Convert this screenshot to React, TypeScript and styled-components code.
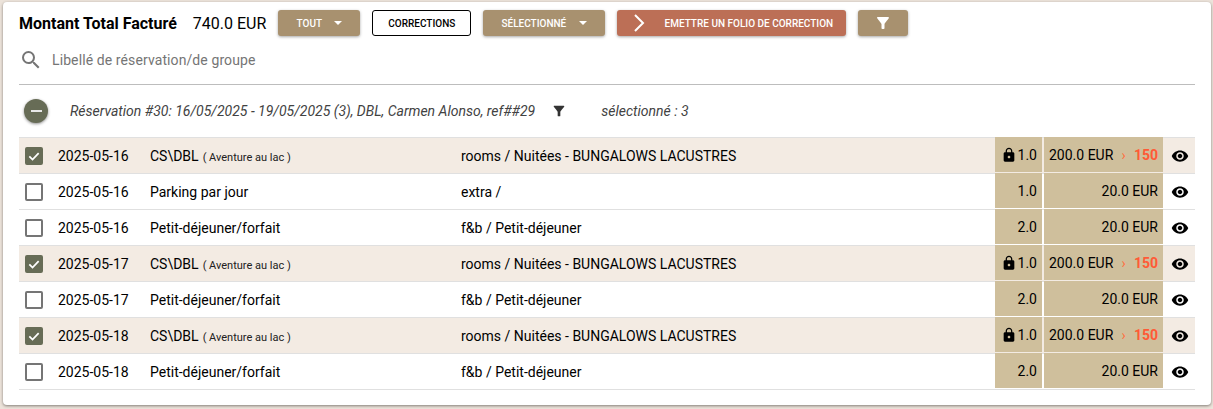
import React from 'react';
import styled, { createGlobalStyle } from 'styled-components';

const GlobalStyle = createGlobalStyle`
  html, body {
    margin: 0;
    padding: 0;
    background: #ece3da;
    font-family: Roboto, "Liberation Sans", sans-serif;
  }
`;

const Page = styled.div`
  width: 1213px;
  height: 409px;
  padding: 2px 2px 4px 3px;
  box-sizing: border-box;
  overflow: hidden;
`;

const Card = styled.div`
  height: 403px;
  background: #fff;
  border-radius: 4px;
  box-shadow: 0 1px 3px rgba(0, 0, 0, 0.45);
  padding: 8px 16px 0 16px;
  box-sizing: border-box;
`;

const Toolbar = styled.div`
  display: flex;
  align-items: center;
  height: 26px;
`;

const Title = styled.span`
  font-size: 16px;
  font-weight: 700;
  color: #000;
  margin-right: 16px;
`;

const Amount = styled.span`
  font-size: 16px;
  color: #000;
  margin-right: 12px;
`;

const ActionButton = styled.button<{ $width: number; $color?: string; $gap?: number }>`
  width: ${(p) => p.$width}px;
  height: 26px;
  margin-right: 12px;
  border: none;
  border-radius: 3px;
  background: ${(p) => p.$color || '#a8916f'};
  color: #fff;
  font-family: inherit;
  font-size: 10px;
  font-weight: 500;
  padding: 0;
  display: flex;
  align-items: center;
  justify-content: center;
  gap: ${(p) => p.$gap ?? 0}px;
  box-shadow: 0 1px 3px rgba(0, 0, 0, 0.35);
`;

const OutlineButton = styled.button`
  width: 99px;
  height: 26px;
  margin-right: 12px;
  border: 1px solid #000;
  border-radius: 3px;
  background: #fff;
  color: #000;
  font-family: inherit;
  font-size: 10px;
  font-weight: 500;
  padding: 0;
`;

const Caret = styled.span`
  width: 0;
  height: 0;
  border-left: 4px solid transparent;
  border-right: 4px solid transparent;
  border-top: 4px solid #fff;
`;

const SearchBar = styled.div`
  display: flex;
  align-items: center;
  gap: 9px;
  height: 49px;
  box-sizing: border-box;
  border-bottom: 1px solid #bdbdbd;
  color: #757575;
  font-size: 14px;
  letter-spacing: 0.1px;
`;

const SearchRow = styled.div`
  margin-top: 0;
`;

const GroupHeader = styled.div`
  display: flex;
  align-items: center;
  height: 52px;
  padding-left: 5px;
  font-size: 14px;
  font-style: italic;
  color: #424242;
`;

const CollapseButton = styled.span`
  width: 24px;
  height: 24px;
  border-radius: 50%;
  background: #676c56;
  box-shadow: 0 1px 3px rgba(0, 0, 0, 0.45);
  display: flex;
  align-items: center;
  justify-content: center;
  margin-right: 22px;
  &::after {
    content: '';
    width: 11px;
    height: 2px;
    background: #e8e8e8;
  }
`;

const FilterMark = styled.span`
  display: flex;
  margin: 0 34px 0 16px;
`;

const Rows = styled.div`
  border-top: 1px solid #e0e0e0;
`;

const Row = styled.div<{ $selected?: boolean }>`
  display: grid;
  grid-template-columns: 39px 92px 311px 534px 49px 120px 32px;
  height: 36px;
  box-sizing: border-box;
  border-bottom: 1px solid #e0e0e0;
  background: ${(p) => (p.$selected ? '#f3ebe3' : '#fff')};
  align-items: center;
  font-size: 14px;
  color: #000;
`;

const CheckCell = styled.div`
  padding-left: 6px;
  display: flex;
`;

const CheckBox = styled.span<{ $checked?: boolean }>`
  width: 18px;
  height: 18px;
  box-sizing: border-box;
  border-radius: 2px;
  border: 2px solid ${(p) => (p.$checked ? '#676c56' : '#757575')};
  background: ${(p) => (p.$checked ? '#676c56' : '#fff')};
  display: flex;
  align-items: center;
  justify-content: center;
`;

const Note = styled.span`
  font-size: 11px;
  margin-left: 4px;
  color: #212121;
`;

const AmountCell = styled.div`
  align-self: stretch;
  margin: -1px 2px -0px 0;
  background: #cfbf9c;
  display: flex;
  align-items: center;
  justify-content: flex-end;
  padding-right: 5px;
  height: 35px;
  box-sizing: border-box;
`;

const PriceCell = styled(AmountCell)`
  margin-right: 0;
  width: 119px;
  justify-content: space-between;
  padding: 0 5px;
`;

const PriceRight = styled.span`
  margin-left: auto;
`;

const Arrow = styled.span`
  color: #ff6e40;
  margin-left: 6px;
  font-size: 14px;
`;

const NewPrice = styled.span`
  color: #ff5a36;
  font-weight: 700;
  margin-left: 6px;
`;

const EyeCell = styled.div`
  display: flex;
  justify-content: center;
  padding-right: 0;
`;

const FilterIcon = ({ size, color }: { size: number; color: string }) => (
  <svg width={size} height={size} viewBox="0 0 24 24" fill={color}>
    <path d="M4.25 5.61C6.27 8.2 10 13 10 13v6c0 .55.45 1 1 1h2c.55 0 1-.45 1-1v-6s3.72-4.8 5.74-7.39A.998.998 0 0 0 18.95 4H5.04c-.83 0-1.3.95-.79 1.61z" />
  </svg>
);

const SearchIcon = () => (
  <svg width="24" height="24" viewBox="0 0 24 24" fill="#757575">
    <path d="M15.5 14h-.79l-.28-.27A6.471 6.471 0 0 0 16 9.5 6.5 6.5 0 1 0 9.5 16c1.61 0 3.09-.59 4.23-1.57l.27.28v.79l5 4.99L20.49 19l-4.99-5zm-6 0C7.01 14 5 11.99 5 9.5S7.01 5 9.5 5 14 7.01 14 9.5 11.99 14 9.5 14z" />
  </svg>
);

const EyeIcon = () => (
  <svg width="18" height="18" viewBox="0 0 24 24" fill="#000">
    <path d="M12 4.5C7 4.5 2.73 7.61 1 12c1.73 4.39 6 7.5 11 7.5s9.27-3.11 11-7.5c-1.73-4.39-6-7.5-11-7.5zM12 17c-2.76 0-5-2.24-5-5s2.24-5 5-5 5 2.24 5 5-2.24 5-5 5zm0-8c-1.66 0-3 1.34-3 3s1.34 3 3 3 3-1.34 3-3-1.34-3-3-3z" />
  </svg>
);

const LockIcon = () => (
  <svg width="16" height="16" viewBox="0 0 24 24" fill="#000" style={{ marginRight: 1 }}>
    <path d="M18 8h-1V6c0-2.76-2.24-5-5-5S7 3.24 7 6v2H6c-1.1 0-2 .9-2 2v10c0 1.1.9 2 2 2h12c1.1 0 2-.9 2-2V10c0-1.1-.9-2-2-2zm-6 9c-1.1 0-2-.9-2-2s.9-2 2-2 2 .9 2 2-.9 2-2 2zm3.1-9H8.9V6c0-1.71 1.39-3.1 3.1-3.1 1.71 0 3.1 1.39 3.1 3.1v2z" />
  </svg>
);

const CheckIcon = () => (
  <svg width="14" height="14" viewBox="0 0 24 24" fill="none" stroke="#fff" strokeWidth="3">
    <path d="M4 12.5l5.5 5.5L20 7" />
  </svg>
);

type Line = {
  date: string;
  name: string;
  note?: string;
  desc: string;
  qty: string;
  price: string;
  corrected?: string;
  selected?: boolean;
};

const lines: Line[] = [
  { date: '2025-05-16', name: 'CS\\DBL', note: '( Aventure au lac )', desc: 'rooms / Nuitées - BUNGALOWS LACUSTRES', qty: '1.0', price: '200.0 EUR', corrected: '150', selected: true },
  { date: '2025-05-16', name: 'Parking par jour', desc: 'extra /', qty: '1.0', price: '20.0 EUR' },
  { date: '2025-05-16', name: 'Petit-déjeuner/forfait', desc: 'f&b / Petit-déjeuner', qty: '2.0', price: '20.0 EUR' },
  { date: '2025-05-17', name: 'CS\\DBL', note: '( Aventure au lac )', desc: 'rooms / Nuitées - BUNGALOWS LACUSTRES', qty: '1.0', price: '200.0 EUR', corrected: '150', selected: true },
  { date: '2025-05-17', name: 'Petit-déjeuner/forfait', desc: 'f&b / Petit-déjeuner', qty: '2.0', price: '20.0 EUR' },
  { date: '2025-05-18', name: 'CS\\DBL', note: '( Aventure au lac )', desc: 'rooms / Nuitées - BUNGALOWS LACUSTRES', qty: '1.0', price: '200.0 EUR', corrected: '150', selected: true },
  { date: '2025-05-18', name: 'Petit-déjeuner/forfait', desc: 'f&b / Petit-déjeuner', qty: '2.0', price: '20.0 EUR' },
];

const App = () => {
  return (
    <React.Fragment>
      <GlobalStyle />
      <Page>
        <Card>
          <Toolbar>
            <Title>Montant Total Facturé</Title>
            <Amount>740.0 EUR</Amount>
            <ActionButton $width={82} $gap={12}>TOUT <Caret /></ActionButton>
            <OutlineButton>CORRECTIONS</OutlineButton>
            <ActionButton $width={122} $gap={13}>SÉLECTIONNÉ <Caret /></ActionButton>
            <ActionButton $width={229} $color="#bc6f56" $gap={18}>
              <svg width="16" height="18" viewBox="0 0 16 18" fill="none" stroke="#fff" strokeWidth="2">
                <path d="M4 1l8 8-8 8" />
              </svg>
              EMETTRE UN FOLIO DE CORRECTION
            </ActionButton>
            <ActionButton $width={50}><FilterIcon size={18} color="#fff" /></ActionButton>
          </Toolbar>
          <SearchRow>
            <SearchBar>
              <SearchIcon />
              Libellé de réservation/de groupe
            </SearchBar>
          </SearchRow>
          <GroupHeader>
            <CollapseButton />
            Réservation #30: 16/05/2025 - 19/05/2025 (3), DBL, Carmen Alonso, ref##29
            <FilterMark><FilterIcon size={16} color="#333" /></FilterMark>
            sélectionné : 3
          </GroupHeader>
          <Rows>
            {lines.map((line, i) => (
              <Row key={i} $selected={line.selected}>
                <CheckCell>
                  <CheckBox $checked={line.selected}>{line.selected && <CheckIcon />}</CheckBox>
                </CheckCell>
                <div>{line.date}</div>
                <div>
                  {line.name}
                  {line.note && <Note>{line.note}</Note>}
                </div>
                <div>{line.desc}</div>
                <AmountCell>
                  {line.corrected && <LockIcon />}
                  {line.qty}
                </AmountCell>
                <PriceCell>
                  {line.corrected ? (
                    <React.Fragment>
                      {line.price}
                      <Arrow>›</Arrow>
                      <NewPrice>{line.corrected}</NewPrice>
                    </React.Fragment>
                  ) : (
                    <PriceRight>{line.price}</PriceRight>
                  )}
                </PriceCell>
                <EyeCell><EyeIcon /></EyeCell>
              </Row>
            ))}
          </Rows>
        </Card>
      </Page>
    </React.Fragment>
  );
};

export default App;
